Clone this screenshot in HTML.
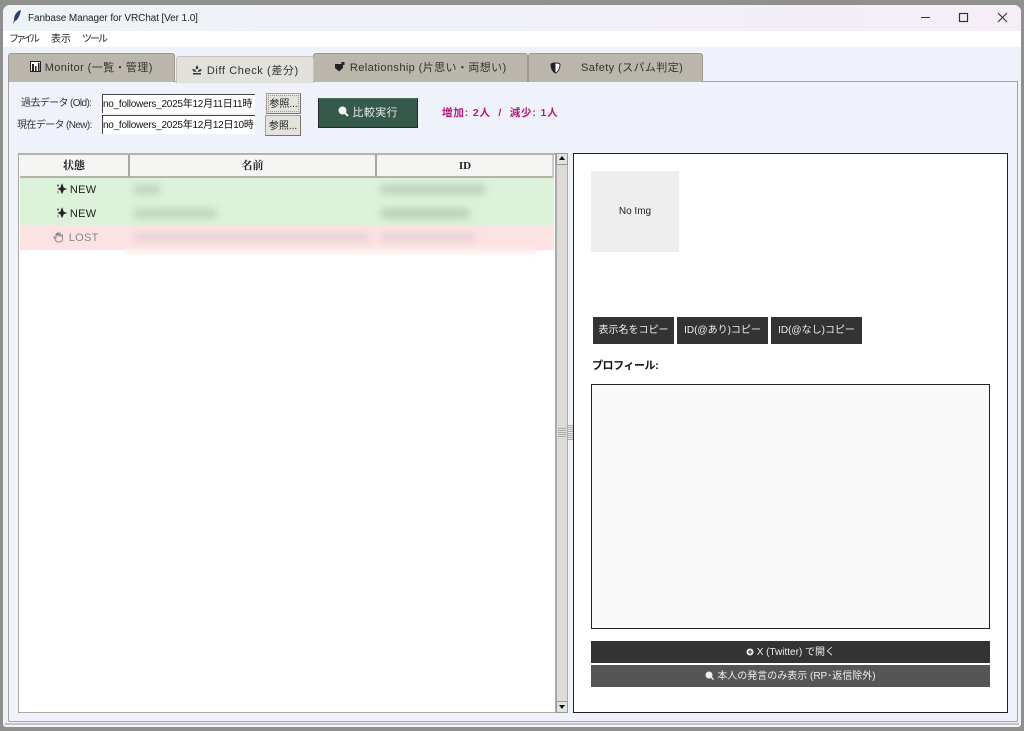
<!DOCTYPE html>
<html><head><meta charset="utf-8"><style>
html,body{margin:0;padding:0;background:#8a8a88;overflow:hidden}
#r{position:relative;width:1024px;height:731px;overflow:hidden;background:#8f8f8d;font-family:"Liberation Sans","Noto Sans CJK JP",sans-serif;font-size:10px;color:#222}
#r div,#r span.a{position:absolute;box-sizing:border-box;white-space:nowrap}
.tab{background:#bab6ab;border:1px solid #9d9a90;border-bottom:none;border-radius:3px 3px 0 0;font-size:11px;color:#333;text-align:center;letter-spacing:.4px}
.inp{background:#fff;border-top:1px solid #444;border-left:1px solid #444;height:19px;font-size:10px;line-height:19px;overflow:hidden;color:#111;width:153px;left:102px;letter-spacing:-.25px}
.btn{background:#e4e2dc;border:1px solid #a5a39c;border-right-color:#77756f;border-bottom-color:#77756f;text-align:center;font-size:10px;line-height:21px;color:#222}
.dk{background:#333;color:#eee;text-align:center;font-size:10px;line-height:28px;height:27px;top:317px}
.h{background:#f5f5f4;top:155px;height:23px;border-bottom:2px solid #b5b3ab;font-family:"Liberation Serif","Noto Serif CJK SC",serif;font-weight:bold;font-size:11px;text-align:center;line-height:23px;color:#222;border-right:2px solid #aaa8a0}
.c{font-size:11px;text-align:center;width:110px;left:21px;height:24px;line-height:25px;letter-spacing:.3px}
.bl{filter:blur(4px);height:9px}
</style></head><body><div id="r">
<div style="left:3px;top:5px;width:1018px;height:722px;background:#eff2fb;border-radius:7px 7px 3px 3px"></div>
<div style="left:3px;top:5px;width:1018px;height:26px;background:linear-gradient(90deg,#eef3f7,#f1eff7 60%,#f5eef6);border-radius:7px 7px 0 0"></div>
<svg style="position:absolute;left:10px;top:9px" width="14" height="17" viewBox="0 0 14 17"><path d="M11 1C7 2 4 6 4 11L3 15L5 12C8 11 10 6 11 1Z" fill="#2b3f6b"/></svg>
<div style="left:28px;top:12px;font-size:10px;line-height:14px;color:#222;letter-spacing:-.1px">Fanbase Manager for VRChat [Ver 1.0]</div>
<svg style="position:absolute;left:950px;top:10px" width="66" height="16" viewBox="0 0 66 16" fill="none" stroke="#333" stroke-width="1"><rect x="9.500" y="3.500" width="8" height="8" stroke-width="1.200"/><path d="M48 3L57 12M57 3L48 12" stroke-width="1.100"/></svg>
<div style="left:921px;top:17px;width:9px;height:1px;background:#333"></div>
<div style="left:3px;top:31px;width:1018px;height:16px;background:#fff"></div>
<div style="left:9px;top:33px;font-size:10px;line-height:14px;letter-spacing:-3px">ファイル</div>
<div style="left:51px;top:33px;font-size:10px;line-height:14px">表示</div>
<div style="left:82px;top:33px;font-size:10px;line-height:14px;letter-spacing:-2px">ツール</div>

<div style="left:8px;top:81px;width:1010px;height:641px;background:#eff2fb;border:1px solid #a5a39b;border-radius:0 0 2px 2px"></div>
<div style="left:5px;top:723px;width:1014px;height:2px;background:#c4c4c2"></div>

<div class="tab" style="left:8px;top:53px;width:167px;height:29px;line-height:28px"><svg width="11" height="11" viewBox="0 0 11 11" style="vertical-align:-1px"><rect x=".5" y=".5" width="10" height="10" fill="#fff" stroke="#222"/><path d="M2 3h2v7H2zM5 5h1.500v5H5zM8 2h1.500v8H8z" fill="#222"/></svg>&nbsp;Monitor (一覧・管理)</div>
<div class="tab" style="left:176px;top:56px;width:138px;height:27px;line-height:28px;background:#e1e0da;border-color:#c6c4bc;z-index:2;letter-spacing:.6px"><svg width="12" height="11" viewBox="0 0 12 11" style="vertical-align:-1px"><path d="M6 1L7.500 4L6 5.500L4.500 4ZM1 5L4 5.500L5.500 8L2.500 7.500ZM11 5L8 5.500L6.500 8L9.500 7.500ZM2 9H10V10.500H2Z" fill="#333"/></svg> Diff Check (差分)</div>
<div class="tab" style="left:313px;top:53px;width:215px;height:29px;line-height:28px"><svg width="12" height="11" viewBox="0 0 12 11" style="vertical-align:-1px"><path d="M1 3H9V7L5 10.500L1 7ZM7 1L10.500 1V4H8Z" fill="#222"/></svg> Relationship (片思い・両想い)</div>
<div class="tab" style="left:528px;top:53px;width:175px;height:29px;line-height:28px"><svg width="11" height="12" viewBox="0 0 11 12" style="position:absolute;left:21px;top:8px"><path d="M5.500 1C8 1 10 1.500 10 2.500C10 7 8 10 5.500 11C3 10 1 7 1 2.500C1 1.500 3 1 5.500 1Z" fill="#fff" stroke="#222"/><path d="M5.500 1C3 1 1 1.500 1 2.500C1 7 3 10 5.500 11Z" fill="#222"/></svg><span style="position:absolute;left:52px;top:0">Safety (スパム判定)</span></div>

<div style="left:21px;top:97px;font-size:10px;line-height:14px;color:#333;letter-spacing:-.62px">過去データ (Old):</div>
<div style="left:17px;top:119px;font-size:10px;line-height:14px;color:#333;letter-spacing:-.62px">現在データ (New):</div>
<div class="inp" style="top:94px">no_followers_2025年12月11日11時</div>
<div class="inp" style="top:115px">no_followers_2025年12月12日10時</div>
<div class="btn" style="left:266px;top:93px;width:35px;height:21px;outline:1px dotted #999;outline-offset:-3px">参照...</div>
<div class="btn" style="left:265px;top:115px;width:36px;height:21px">参照...</div>
<div style="left:318px;top:98px;width:100px;height:30px;background:#35594a;border:1px solid #1f2e28;border-top-color:#4a6a5c;color:#e8e8e8;font-size:11px;text-align:center;line-height:28px;letter-spacing:.4px"><svg width="11" height="11" viewBox="0 0 11 11" style="vertical-align:-1px"><circle cx="4.500" cy="4.500" r="4" fill="#f2f2f2"/><path d="M7 7L10 10" stroke="#f2f2f2" stroke-width="2"/></svg>&nbsp;比較実行</div>
<div style="left:442px;top:106px;font-size:10.500px;font-weight:bold;color:#b8187c;line-height:15px;letter-spacing:.85px">増加: 2人 &nbsp;/ &nbsp;減少: 1人</div>

<div style="left:18px;top:153px;width:538px;height:560px;background:#fff;border:1px solid #aaa8a0;border-top:2px solid #b5b3ab"></div>
<div class="h" style="left:20px;width:110px">状態</div>
<div class="h" style="left:130px;width:247px">名前</div>
<div class="h" style="left:377px;width:177px;border-right-color:#ccc;padding-left:1px">ID</div>

<div style="left:20px;top:178px;width:534px;height:48px;background:#dcf2d9"></div>
<div style="left:20px;top:226px;width:534px;height:24px;background:#fde2e3"></div>
<div style="left:126px;top:248px;width:410px;height:6px;background:#fdeeee;filter:blur(2px)"></div>

<div class="c" style="top:178px"><svg width="11" height="11" viewBox="0 0 11 11" style="vertical-align:-1px"><path d="M6 1L7.500 5L10.500 6L7.500 7L6 10.500L4.500 7L2 6L4.500 5ZM2 1V4M1 2.500H3M2 8V10.500" fill="#222" stroke="#222" stroke-width=".6"/></svg>&nbsp;NEW</div>
<div class="c" style="top:202px"><svg width="11" height="11" viewBox="0 0 11 11" style="vertical-align:-1px"><path d="M6 1L7.500 5L10.500 6L7.500 7L6 10.500L4.500 7L2 6L4.500 5ZM2 1V4M1 2.500H3M2 8V10.500" fill="#222" stroke="#222" stroke-width=".6"/></svg>&nbsp;NEW</div>
<div class="c" style="top:226px;color:#888"><svg width="12" height="12" viewBox="0 0 12 12" fill="none" stroke="#777" stroke-width=".8" style="vertical-align:-2px"><path d="M4 11C2.500 10 2 8 1 6L3 7V3L4 2.500V5L5 1.500L6 5L7 2L8 5.500L9.500 4L9.500 8C9.500 10 8 11 6 11Z"/></svg> LOST</div>

<div class="bl" style="left:134px;top:185px;width:26px;background:#bcd3b9"></div>
<div class="bl" style="left:134px;top:209px;width:82px;background:#bad2b7"></div>
<div class="bl" style="left:134px;top:233px;width:235px;background:#e6d2d3"></div>
<div class="bl" style="left:381px;top:185px;width:104px;background:#b8d0b5"></div>
<div class="bl" style="left:381px;top:209px;width:88px;background:#b3ccb0"></div>
<div class="bl" style="left:381px;top:233px;width:94px;background:#e6d2d3"></div>

<div style="left:556px;top:153px;width:12px;height:560px;background:#dddbd5;border-left:1px solid #aaa;border-right:1px solid #aaa"></div>
<div style="left:556px;top:153px;width:12px;height:12px;background:#e4e2dc;border:1px solid #999"></div>
<div style="left:559px;top:156px;width:0;height:0;border:3px solid transparent;border-bottom:4px solid #111;border-top:none"></div>
<div style="left:556px;top:701px;width:12px;height:12px;background:#e4e2dc;border:1px solid #999"></div>
<div style="left:559px;top:705px;width:0;height:0;border:3px solid transparent;border-top:4px solid #111;border-bottom:none"></div>
<div style="left:558px;top:428px;width:8px;height:9px;background:repeating-linear-gradient(#aaa 0 1px,#e4e2dc 1px 2px)"></div>
<div style="left:568px;top:425px;width:5px;height:16px;background:repeating-linear-gradient(#aaa 0 1px,#eee 1px 2px)"></div>

<div style="left:573px;top:153px;width:435px;height:560px;background:#fff;border:1px solid #222"></div>
<div style="left:591px;top:171px;width:88px;height:81px;background:#eee;text-align:center;line-height:82px;font-size:10px;color:#222">No Img</div>
<div class="dk" style="left:593px;width:81px">表示名をコピー</div>
<div class="dk" style="left:677px;width:91px">ID(@あり)コピー</div>
<div class="dk" style="left:771px;width:91px">ID(@なし)コピー</div>
<div style="left:592px;top:359px;font-size:11px;font-weight:bold;line-height:15px;color:#111;letter-spacing:-.45px">プロフィール:</div>
<div style="left:591px;top:384px;width:399px;height:245px;background:#f9f9f9;border:1px solid #222"></div>
<div style="left:591px;top:641px;width:399px;height:22px;background:#333;color:#eee;text-align:center;font-size:10px;line-height:23px"><svg width="8" height="8" viewBox="0 0 8 8" style="vertical-align:-1px"><circle cx="4" cy="4" r="3.500" fill="#eee"/><path d="M2 4H6M4 2V6" stroke="#333"/></svg> X (Twitter) で開く</div>
<div style="left:591px;top:665px;width:399px;height:22px;background:#555;color:#eee;text-align:center;font-size:10px;line-height:23px"><svg width="9" height="9" viewBox="0 0 9 9" style="vertical-align:-1px"><circle cx="4" cy="4" r="3.500" fill="#eee"/><path d="M6 6L8.500 8.500" stroke="#eee" stroke-width="1.500"/></svg> 本人の発言のみ表示 (RP･返信除外)</div>
</div></body></html>
